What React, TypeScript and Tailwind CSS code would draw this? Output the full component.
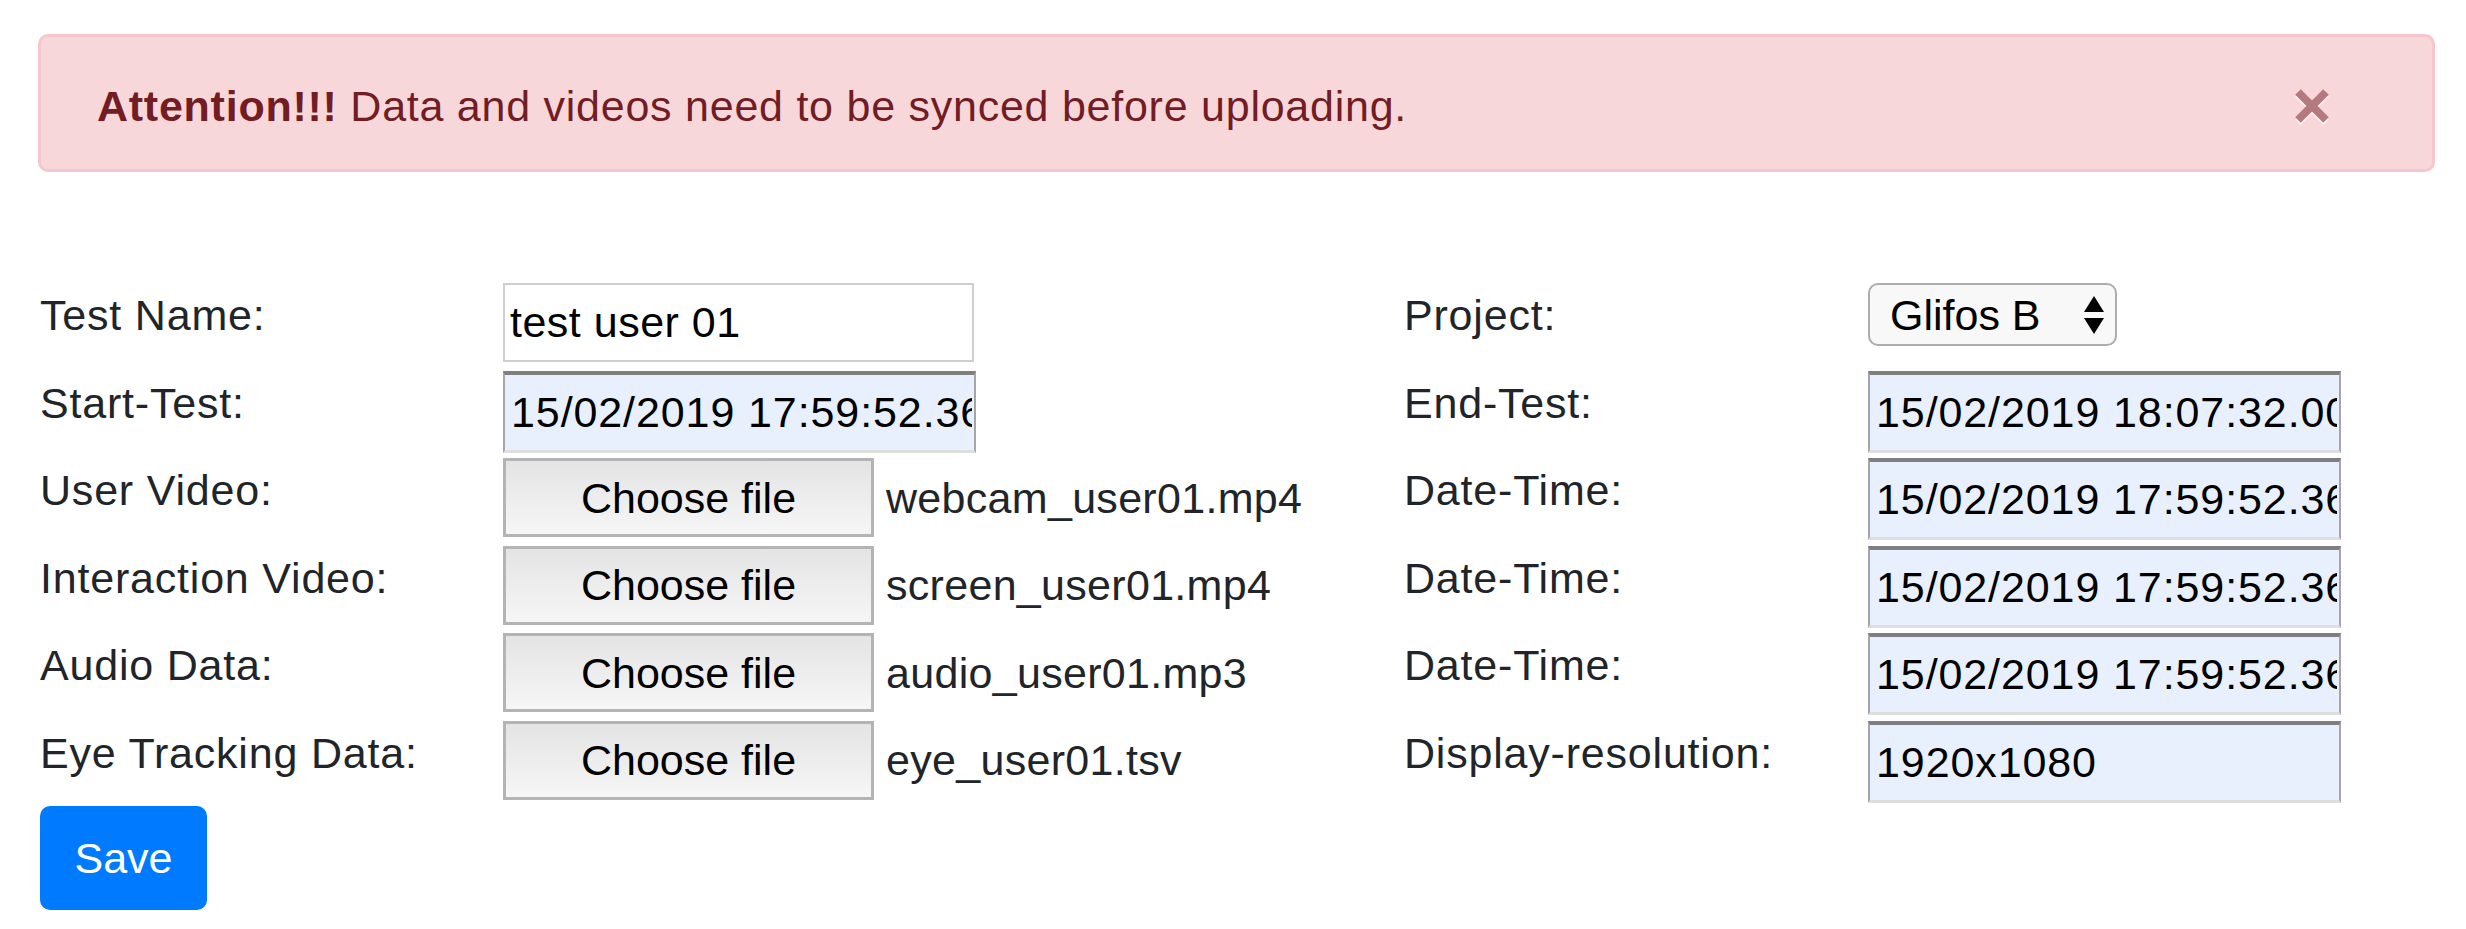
import React from 'react';

const dateInput =
  'w-[473px] h-[82px] bg-[#e8f0fe] border-t-[4px] border-t-[#7f7f7f] border-x-[2px] border-x-[#a6a6a6] border-b-[3px] border-b-[#dedede] pl-[6px] pr-[2px] text-black tracking-[0.9px] outline-none';

const fileButton =
  'w-[371px] h-[79px] shrink-0 border-[3px] border-[#b4b4b4] bg-gradient-to-b from-[#e4e4e4] to-[#f6f6f6] text-black';

interface Row {
  left: string;
  leftControl: React.ReactNode;
  right: string;
  rightControl: React.ReactNode;
}

const FileField: React.FC<{ name: string }> = ({ name }) => (
  <div className="flex items-center gap-[12px] h-[79px]">
    <button type="button" className={fileButton}>
      Choose file
    </button>
    <span className="tracking-[0.3px]">{name}</span>
  </div>
);

const DateField: React.FC<{ value: string }> = ({ value }) => (
  <input readOnly value={value} className={dateInput} />
);

const ProjectSelect: React.FC = () => (
  <div className="flex items-center justify-between w-[249px] h-[63px] border-[2px] border-[#adadad] rounded-[10px] bg-[#f8f8f8] pl-[20px] pr-[10px] text-[43px] text-black">
    <span>Glifos B</span>
    <svg width="22" height="40" viewBox="0 0 22 40">
      <polygon points="11,1 21,17 1,17" fill="#000" />
      <polygon points="1,23 21,23 11,39" fill="#000" />
    </svg>
  </div>
);

export default function App() {
  const rows: Row[] = [
    {
      left: 'Test Name:',
      leftControl: (
        <input
          readOnly
          value="test user 01"
          className="w-[471px] h-[79px] bg-white border-[2px] border-[#cfcfcf] pl-[5px] text-black tracking-[0.5px] outline-none"
        />
      ),
      right: 'Project:',
      rightControl: <ProjectSelect />,
    },
    {
      left: 'Start-Test:',
      leftControl: <DateField value="15/02/2019 17:59:52.369" />,
      right: 'End-Test:',
      rightControl: <DateField value="15/02/2019 18:07:32.000" />,
    },
    {
      left: 'User Video:',
      leftControl: <FileField name="webcam_user01.mp4" />,
      right: 'Date-Time:',
      rightControl: <DateField value="15/02/2019 17:59:52.369" />,
    },
    {
      left: 'Interaction Video:',
      leftControl: <FileField name="screen_user01.mp4" />,
      right: 'Date-Time:',
      rightControl: <DateField value="15/02/2019 17:59:52.369" />,
    },
    {
      left: 'Audio Data:',
      leftControl: <FileField name="audio_user01.mp3" />,
      right: 'Date-Time:',
      rightControl: <DateField value="15/02/2019 17:59:52.369" />,
    },
    {
      left: 'Eye Tracking Data:',
      leftControl: <FileField name="eye_user01.tsv" />,
      right: 'Display-resolution:',
      rightControl: <DateField value="1920x1080" />,
    },
  ];

  return (
    <div className="w-[2466px] h-[929px] bg-white font-['Liberation_Sans',Arial,sans-serif] text-[43px] leading-[64px] text-[#212529] overflow-hidden">
      <div className="pt-[34px] pl-[38px] pr-[31px]">
        <div className="flex items-center justify-between h-[138px] border-[3px] border-[#f5c6cb] bg-[#f8d7da] rounded-[10px] pl-[56px] pr-[103px] pt-[5px] text-[#721c24]">
          <p className="tracking-[0.75px]">
            <strong className="font-bold">Attention!!!</strong> Data and videos need to be synced before uploading.
          </p>
          <button type="button" className="w-[34px] h-[36px] mt-[3px]">
            <svg width="34" height="36" viewBox="0 0 34 36">
              <g stroke="#ffffff" strokeWidth="8" strokeLinecap="butt" opacity="0.8">
                <line x1="3" y1="5" x2="31" y2="33" />
                <line x1="31" y1="5" x2="3" y2="33" />
              </g>
              <g stroke="#b57a7f" strokeWidth="8" strokeLinecap="butt">
                <line x1="3" y1="3" x2="31" y2="31" />
                <line x1="31" y1="3" x2="3" y2="31" />
              </g>
            </svg>
          </button>
        </div>
      </div>

      <form className="pl-[40px] pt-[111px]">
        <div className="grid grid-cols-[463px_901px_464px_auto] auto-rows-[80px] gap-y-[7.5px]">
          {rows.map((row, i) => (
            <React.Fragment key={i}>
              <label className="tracking-[0.8px]">{row.left}</label>
              <div>{row.leftControl}</div>
              <label className="tracking-[0.8px]">{row.right}</label>
              <div>{row.rightControl}</div>
            </React.Fragment>
          ))}
        </div>
        <button
          type="submit"
          className="mt-[5px] w-[167px] h-[104px] rounded-[10px] bg-[#007bff] text-white"
        >
          Save
        </button>
      </form>
    </div>
  );
}
